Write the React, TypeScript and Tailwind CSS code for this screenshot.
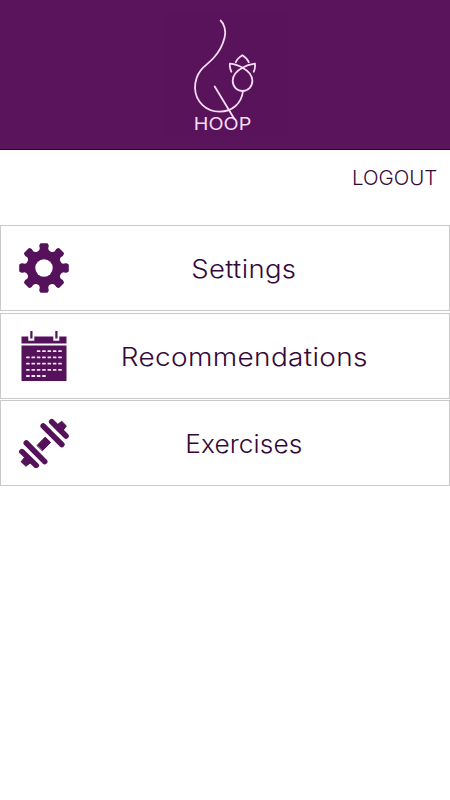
import type { ReactNode } from "react";

const GEAR_ANGLES = [0, 45, 90, 135, 180, 225, 270, 315];
const CALENDAR_ROWS = [
  { y: 20.2, from: 2, to: 6 },
  { y: 26.4, from: 0, to: 6 },
  { y: 32.6, from: 0, to: 6 },
  { y: 38.8, from: 0, to: 6 },
  { y: 45, from: 0, to: 3 },
];

function Logo() {
  return (
    <svg viewBox="163 13 124 124" className="h-[124px] w-[124px] bg-[#58135a]">
      <g fill="none" stroke="#f6dcf7" strokeWidth="1.8" strokeLinecap="round">
        <path d="M220.6 20.5C224.5 24 226.2 31 224.6 37.5C222.8 45 219 52 213.5 58C209 63 204.5 65.5 201 70C197 75 195 81 195 88C195.5 102 206.5 111.6 219.5 111.6C232.5 111.6 241.5 103.5 243 91" />
        <path d="M214.7 86.5L234.4 119" />
        <path d="M229.9 63.7C235 64.3 238.5 65.2 242.4 67.7C249 71.2 252.4 75.8 252.4 80.8C252.4 86.8 248 91 242.5 91C237 91 232.7 86.8 232.7 80.8C232.7 75.8 236 71.2 242.4 67.7C246.5 65.2 250 64.3 254.9 63.7C255.3 66.5 255 69 253.8 71.7M229.9 63.7C229.6 66.5 230 69 231.3 71.7" />
        <path d="M235.8 62.2C236.8 59.5 239 57.2 242.4 55.2C245.6 57.2 247.8 59.5 248.8 62.2" />
      </g>
      <text
        x="193.8"
        y="130"
        textLength="57.5"
        lengthAdjust="spacingAndGlyphs"
        fill="#f6dcf7"
        fontSize="17"
        fontWeight="400"
        className="font-['Inter',sans-serif]"
      >
        HOOP
      </text>
    </svg>
  );
}

function GearIcon() {
  return (
    <svg viewBox="-25 -25 50 50" className="size-[50px]" fill="#56115b">
      <circle r="20.5" />
      {GEAR_ANGLES.map((angle) => (
        <path
          key={angle}
          transform={`rotate(${angle})`}
          d="M-6.2-18L-4.3-23.6Q-4-24.8-2.8-24.8H2.8Q4-24.8 4.3-23.6L6.2-18Z"
        />
      ))}
      {GEAR_ANGLES.map((angle) => (
        <circle key={angle} cx="0" cy="-21.6" r="3.9" fill="#fff" transform={`rotate(${angle + 22.5})`} />
      ))}
      <circle r="8.7" fill="#fff" />
    </svg>
  );
}

function CalendarIcon() {
  return (
    <svg viewBox="0 0 50 50" className="size-[50px]" fill="#56115b">
      <path d="M2.5 5.5h45v7h-45zM2.5 14.4h45v35.6h-45z" />
      <path d="M9.3 3h6v6.7h-6zM34.3 3h6v6.7h-6z" fill="#fff" />
      <path d="M11.3 0h2.2v7.6h-2.2zM36.3 0h2.2v7.6h-2.2z" />
      {CALENDAR_ROWS.map((row) => (
        <g key={row.y} fill="#f5e6f6">
          {[0, 1, 2, 3, 4, 5, 6]
            .filter((col) => col >= row.from && col <= row.to)
            .map((col) => (
              <rect key={col} x={7.1 + col * 5.35} y={row.y - 0.9} width="3.6" height="1.8" rx="0.5" />
            ))}
        </g>
      ))}
    </svg>
  );
}

function DumbbellIcon() {
  return (
    <svg viewBox="0 0 50 50" className="size-[50px]" fill="none" stroke="#56115b" strokeWidth="5.6" strokeLinecap="round">
      <path d="M2.9 33.6L17.2 47.4M7.3 25L25.7 43.6M24.2 8L42.8 26.5M32.7 3.7L47 18" />
      <path
        d="M18.2 27.3L26.2 19.1L31.6 24.4L23.6 32.6ZM5.5 39.5L2.1 43.8L6.9 48.2L12 44.5ZM38 7L42.7 3.3L47.4 7.9L44 12.5Z"
        fill="#56115b"
        strokeWidth="1"
        strokeLinejoin="round"
      />
    </svg>
  );
}

type Props = {
  icon: ReactNode,
  children: ReactNode,
};
function MenuItem({ icon, children }: Props) {
  return (
    <button className="grid h-[86px] w-full grid-cols-[50px_1fr_12px] items-center border border-[#c9c9c9] bg-white px-[18px]">
      {icon}
      <span className="pt-[2px] text-center whitespace-nowrap">{children}</span>
    </button>
  );
}

export default function App() {
  return (
    <div className="min-h-screen w-full bg-white font-['Inter',sans-serif] font-light text-[#35083a]">
      <header className="flex h-[150px] justify-center border-b border-[#2b0630] bg-[#5a145c] pt-[13px]">
        <Logo />
      </header>
      <div className="flex h-[75px] justify-end pt-[14px] pr-[13px]">
        <button className="h-7 origin-right scale-x-105 text-[19.5px] leading-7">LOGOUT</button>
      </div>
      <nav className="flex flex-col gap-[1.5px] text-[25px] leading-8">
        <MenuItem icon={<GearIcon />}>
          <span className="inline-block scale-x-110 tracking-[0.3px]">Settings</span>
        </MenuItem>
        <MenuItem icon={<CalendarIcon />}>
          <span className="inline-block scale-x-112 tracking-[0.3px]">Recommendations</span>
        </MenuItem>
        <MenuItem icon={<DumbbellIcon />}>
          <span className="inline-block scale-x-105 tracking-[0.1px]">Exercises</span>
        </MenuItem>
      </nav>
    </div>
  );
}
